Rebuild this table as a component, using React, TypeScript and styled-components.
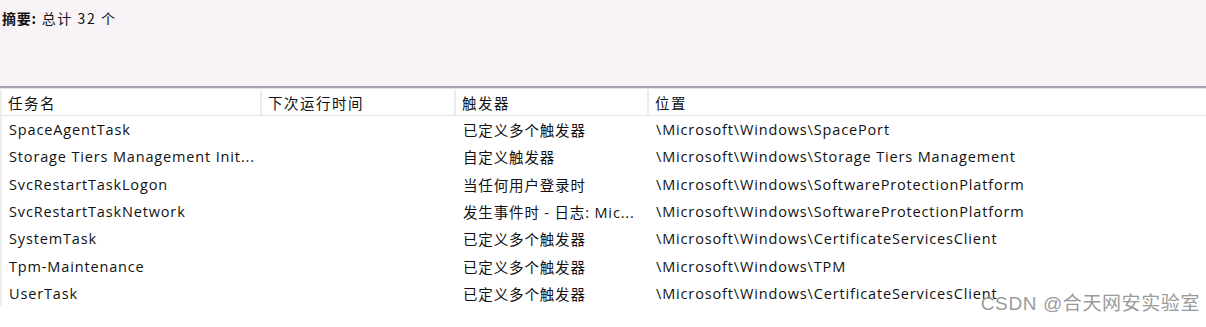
import React from 'react';
import styled, { createGlobalStyle } from 'styled-components';

const GlobalStyle = createGlobalStyle`
  html, body {
    margin: 0;
    padding: 0;
    background: #ffffff;
  }
  body {
    font-family: "Open Sans", "Noto Sans CJK SC", sans-serif;
    color: #000;
  }
`;

type Task = {
  name: string;
  trigger: string;
  location: string;
};

const tasks: Task[] = [
  { name: 'SpaceAgentTask', trigger: '已定义多个触发器', location: '\\Microsoft\\Windows\\SpacePort' },
  { name: 'Storage Tiers Management Init...', trigger: '自定义触发器', location: '\\Microsoft\\Windows\\Storage Tiers Management' },
  { name: 'SvcRestartTaskLogon', trigger: '当任何用户登录时', location: '\\Microsoft\\Windows\\SoftwareProtectionPlatform' },
  { name: 'SvcRestartTaskNetwork', trigger: '发生事件时 - 日志: Mic...', location: '\\Microsoft\\Windows\\SoftwareProtectionPlatform' },
  { name: 'SystemTask', trigger: '已定义多个触发器', location: '\\Microsoft\\Windows\\CertificateServicesClient' },
  { name: 'Tpm-Maintenance', trigger: '已定义多个触发器', location: '\\Microsoft\\Windows\\TPM' },
  { name: 'UserTask', trigger: '已定义多个触发器', location: '\\Microsoft\\Windows\\CertificateServicesClient' },
];

const columns = '260px 194px 193px 1fr';

export default function App() {
  return (
    <>
      <GlobalStyle />
      <Page>
        <Summary>
          <SummaryLabel>摘要:</SummaryLabel> 总计 32 个
        </Summary>
        <Divider />
        <Table>
          <HeaderRow>
            <HeaderCell>任务名</HeaderCell>
            <HeaderCell>下次运行时间</HeaderCell>
            <HeaderCell>触发器</HeaderCell>
            <HeaderCell $last>位置</HeaderCell>
          </HeaderRow>
          {tasks.map((t) => (
            <Row key={t.name}>
              <Cell>{t.name}</Cell>
              <Cell />
              <Cell>{t.trigger}</Cell>
              <Cell>{t.location}</Cell>
            </Row>
          ))}
        </Table>
        <Watermark>CSDN @合天网安实验室</Watermark>
      </Page>
    </>
  );
}

const Page = styled.div`
  position: relative;
  width: 1206px;
  height: 327px;
  overflow: hidden;
  background: #ffffff;
`;

const Summary = styled.div`
  height: 86px;
  box-sizing: border-box;
  padding: 9px 0 0 2px;
  background: #f7f3f7;
  font-size: 14px;
  letter-spacing: 1.6px;
  line-height: 18px;
  font-family: "Noto Sans CJK SC", sans-serif;
  color: #111;
`;

const SummaryLabel = styled.span`
  font-weight: 700;
  letter-spacing: 0.8px;
`;

const Divider = styled.div`
  height: 2px;
  background: #a6a3b3;
  border-bottom: 1px solid #e4e2ea;
`;

const Table = styled.div`
  display: flex;
  flex-direction: column;
  border-left: 2px solid #eeeeee;
  margin-top: 1px;
`;

const HeaderRow = styled.div`
  display: grid;
  grid-template-columns: ${columns};
  height: 26px;
  box-sizing: border-box;
  border-bottom: 1px solid #e3e3e3;
`;

const HeaderCell = styled.div<{ $last?: boolean }>`
  display: flex;
  align-items: center;
  padding-left: 6px;
  border-right: ${(p) => (p.$last ? 'none' : '2px solid #ececec')};
  font-family: "Noto Sans CJK SC", sans-serif;
  font-size: 14.5px;
  letter-spacing: 1.5px;
  color: #111;
  white-space: nowrap;
  overflow: hidden;
`;

const Row = styled.div`
  display: grid;
  grid-template-columns: ${columns};
  height: 27.3px;
  align-items: center;
`;

const Cell = styled.div`
  padding-left: 7px;
  font-family: "Open Sans", "Noto Sans CJK SC", sans-serif;
  font-size: 14.5px;
  letter-spacing: 0.85px;
  color: #111;
  white-space: nowrap;
  overflow: hidden;
`;

const Watermark = styled.div`
  position: absolute;
  right: 6px;
  bottom: 12px;
  font-family: "Liberation Sans", "Noto Sans CJK SC", sans-serif;
  font-size: 19px;
  line-height: 22px;
  letter-spacing: 0.6px;
  color: #9a9a9a;
  pointer-events: none;
`;
